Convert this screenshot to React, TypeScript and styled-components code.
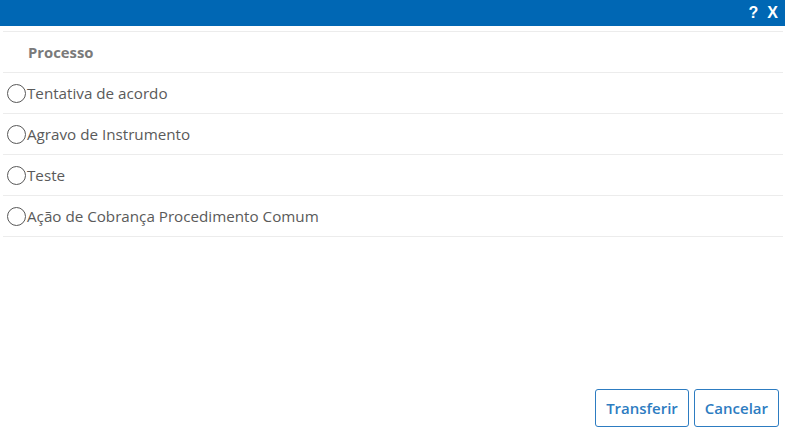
import styled, { createGlobalStyle } from "styled-components";

const GlobalStyle = createGlobalStyle`
  html, body {
    margin: 0;
    padding: 0;
    background: #ffffff;
  }
  body {
    font-family: "Open Sans", "Noto Sans", sans-serif;
  }
`;

const Dialog = styled.div`
  width: 785px;
  height: 434px;
  display: flex;
  flex-direction: column;
  background: #fff;
  overflow: hidden;
`;

const TitleBar = styled.div`
  height: 26px;
  background: #0067b4;
  display: flex;
  justify-content: flex-end;
  align-items: center;
  gap: 9px;
  padding-right: 7px;
  color: #fff;
  font-family: "Liberation Sans", Arial, sans-serif;
  font-weight: 700;
  font-size: 16px;
`;

const TitleButton = styled.span`
  cursor: pointer;
  line-height: 1;
`;

const Body = styled.div`
  flex: 1;
  padding: 5px 2px 0 3px;
`;

const Table = styled.div`
  display: flex;
  flex-direction: column;
  border-top: 1px solid #ececec;
`;

const HeaderRow = styled.div`
  height: 40px;
  display: flex;
  align-items: center;
  padding-left: 25px;
  border-bottom: 1px solid #ececec;
  font-size: 14.8px;
  font-weight: 700;
  color: #7a7a7a;
`;

const Row = styled.label`
  height: 40px;
  display: flex;
  align-items: center;
  gap: 1px;
  padding-left: 4px;
  border-bottom: 1px solid #ececec;
  font-size: 15.2px;
  color: #5a5a5a;
  cursor: pointer;
`;

const Radio = styled.span`
  width: 17px;
  height: 17px;
  border: 1.5px solid #585858;
  border-radius: 50%;
  flex-shrink: 0;
`;

const Footer = styled.div`
  display: flex;
  justify-content: flex-end;
  gap: 5px;
  padding: 0 6px 7px 0;
`;

const Button = styled.button`
  height: 38px;
  padding: 0 10px;
  background: #fff;
  border: 1px solid #2d7cc1;
  border-radius: 3px;
  color: #2d7cc1;
  font-family: "Open Sans", "Noto Sans", sans-serif;
  font-size: 15px;
  font-weight: 600;
  cursor: pointer;
`;

const processos = [
  "Tentativa de acordo",
  "Agravo de Instrumento",
  "Teste",
  "Ação de Cobrança Procedimento Comum",
];

export default function App() {
  return (
    <>
      <GlobalStyle />
      <Dialog>
        <TitleBar>
          <TitleButton>?</TitleButton>
          <TitleButton>X</TitleButton>
        </TitleBar>
        <Body>
          <Table>
            <HeaderRow>Processo</HeaderRow>
            {processos.map((p) => (
              <Row key={p}>
                <Radio />
                {p}
              </Row>
            ))}
          </Table>
        </Body>
        <Footer>
          <Button>Transferir</Button>
          <Button>Cancelar</Button>
        </Footer>
      </Dialog>
    </>
  );
}
